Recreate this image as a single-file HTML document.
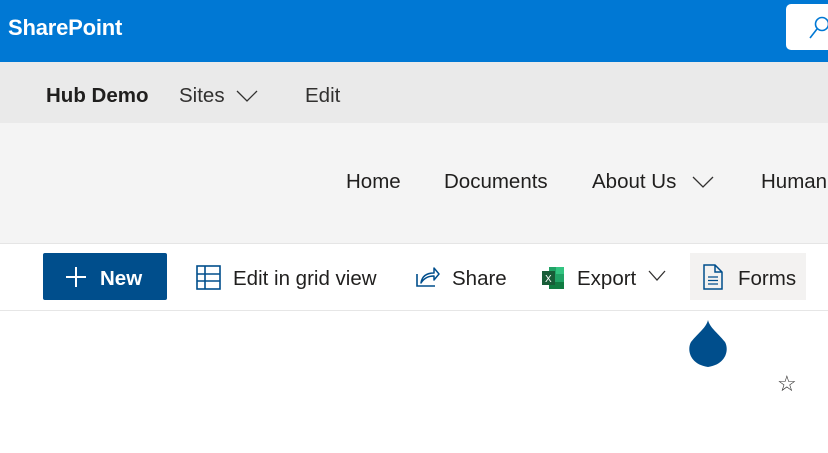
<!DOCTYPE html>
<html><head><style>
body{margin:0;width:828px;height:453px;overflow:hidden;background:#fff;font-family:"Segoe UI","Liberation Sans",sans-serif;color:#201f1e;position:relative}
.a{position:absolute;white-space:nowrap}
.t{font-size:20.5px;line-height:24px}
</style></head><body>
<div class="a" style="left:0;top:0;width:828px;height:62px;background:#0078d4"></div>
<div class="a" style="left:8px;top:15px;color:#fff;font-size:22px;line-height:26px;font-weight:bold;letter-spacing:-0.2px">SharePoint</div>
<div class="a" style="left:786px;top:4px;width:60px;height:46px;background:#fff;border-radius:5px"></div>
<svg class="a" style="left:808px;top:15px" width="20" height="26"><circle cx="14" cy="9" r="6.5" fill="none" stroke="#0078d4" stroke-width="1.6"/><line x1="9" y1="14" x2="2" y2="23" stroke="#0078d4" stroke-width="1.6"/></svg>
<div class="a" style="left:0;top:62px;width:828px;height:61px;background:#eaeaea"></div>
<div class="a t" style="left:46px;top:84px;font-weight:600">Hub Demo</div>
<div class="a t" style="left:179px;top:84px;color:#323130">Sites</div>
<svg class="a" style="left:236px;top:89px" width="24" height="14"><polyline points="1,2 11,12 21,2" fill="none" stroke="#323130" stroke-width="1.3"/></svg>
<div class="a t" style="left:305px;top:84px;color:#323130">Edit</div>
<div class="a" style="left:0;top:123px;width:828px;height:120px;background:#f4f4f4;border-bottom:1px solid #e5e5e5"></div>
<div class="a t" style="left:346px;top:170px">Home</div>
<div class="a t" style="left:444px;top:170px">Documents</div>
<div class="a t" style="left:592px;top:170px">About Us</div>
<svg class="a" style="left:692px;top:175px" width="24" height="14"><polyline points="1,2 11,12 21,2" fill="none" stroke="#323130" stroke-width="1.3"/></svg>
<div class="a t" style="left:761px;top:170px">Human</div>
<div class="a" style="left:0;top:310px;width:828px;height:1px;background:#e6e6e6"></div>
<div class="a" style="left:43px;top:253px;width:124px;height:47px;background:#004e8c;border-radius:2px"></div>
<svg class="a" style="left:65px;top:266px" width="22" height="22"><path d="M11 1V21M1 11H21" stroke="#fff" stroke-width="2"/></svg>
<div class="a t" style="left:100px;top:267px;color:#fff;font-weight:600">New</div>
<svg class="a" style="left:196px;top:265px" width="26" height="26"><rect x="1" y="1" width="23" height="23" fill="none" stroke="#004e8c" stroke-width="1.6"/><path d="M1 9H24M1 16H24M9 1V24" stroke="#004e8c" stroke-width="1.6"/></svg>
<div class="a t" style="left:233px;top:267px">Edit in grid view</div>
<svg class="a" style="left:415px;top:264px" width="26" height="26"><path d="M2 10V22H20" fill="none" stroke="#004e8c" stroke-width="1.6"/><path d="M6 19C7 12 12 9 19 9V4L24 10L19 16V12C13 12 9 14 6 19Z" fill="none" stroke="#004e8c" stroke-width="1.5" stroke-linejoin="round"/></svg>
<div class="a t" style="left:452px;top:267px">Share</div>
<svg class="a" style="left:541px;top:266px" width="24" height="24"><rect x="8" y="1" width="15" height="22" fill="#21a366"/><rect x="15" y="1" width="8" height="7" fill="#33c481"/><rect x="8" y="16" width="15" height="7" fill="#107c41"/><rect x="1" y="5" width="13" height="14" fill="#185c37"/><text x="4" y="16" font-size="10" fill="#fff" font-family="Liberation Sans">X</text></svg>
<div class="a t" style="left:577px;top:267px">Export</div>
<svg class="a" style="left:648px;top:270px" width="20" height="12"><polyline points="1,1 9,10 17,1" fill="none" stroke="#323130" stroke-width="1.3"/></svg>
<div class="a" style="left:690px;top:253px;width:116px;height:47px;background:#f3f2f1"></div>
<svg class="a" style="left:703px;top:264px" width="20" height="26"><path d="M1 1H12L19 8V25H1Z M12 1V8H19" fill="none" stroke="#004e8c" stroke-width="1.5"/><path d="M5 13H15M5 16.5H15M5 20H15" stroke="#004e8c" stroke-width="1.3"/></svg>
<div class="a t" style="left:738px;top:267px">Forms</div>
<svg class="a" style="left:688px;top:320px" width="40" height="48"><path d="M20 0C22 8 29 12 37 22C41 29 39 44 20 47C1 44 -1 29 3 22C11 12 18 8 20 0Z" fill="#004e8c"/></svg>
<div class="a" style="left:777px;top:371px;font-size:22px;color:#323130">☆</div>
</body></html>
